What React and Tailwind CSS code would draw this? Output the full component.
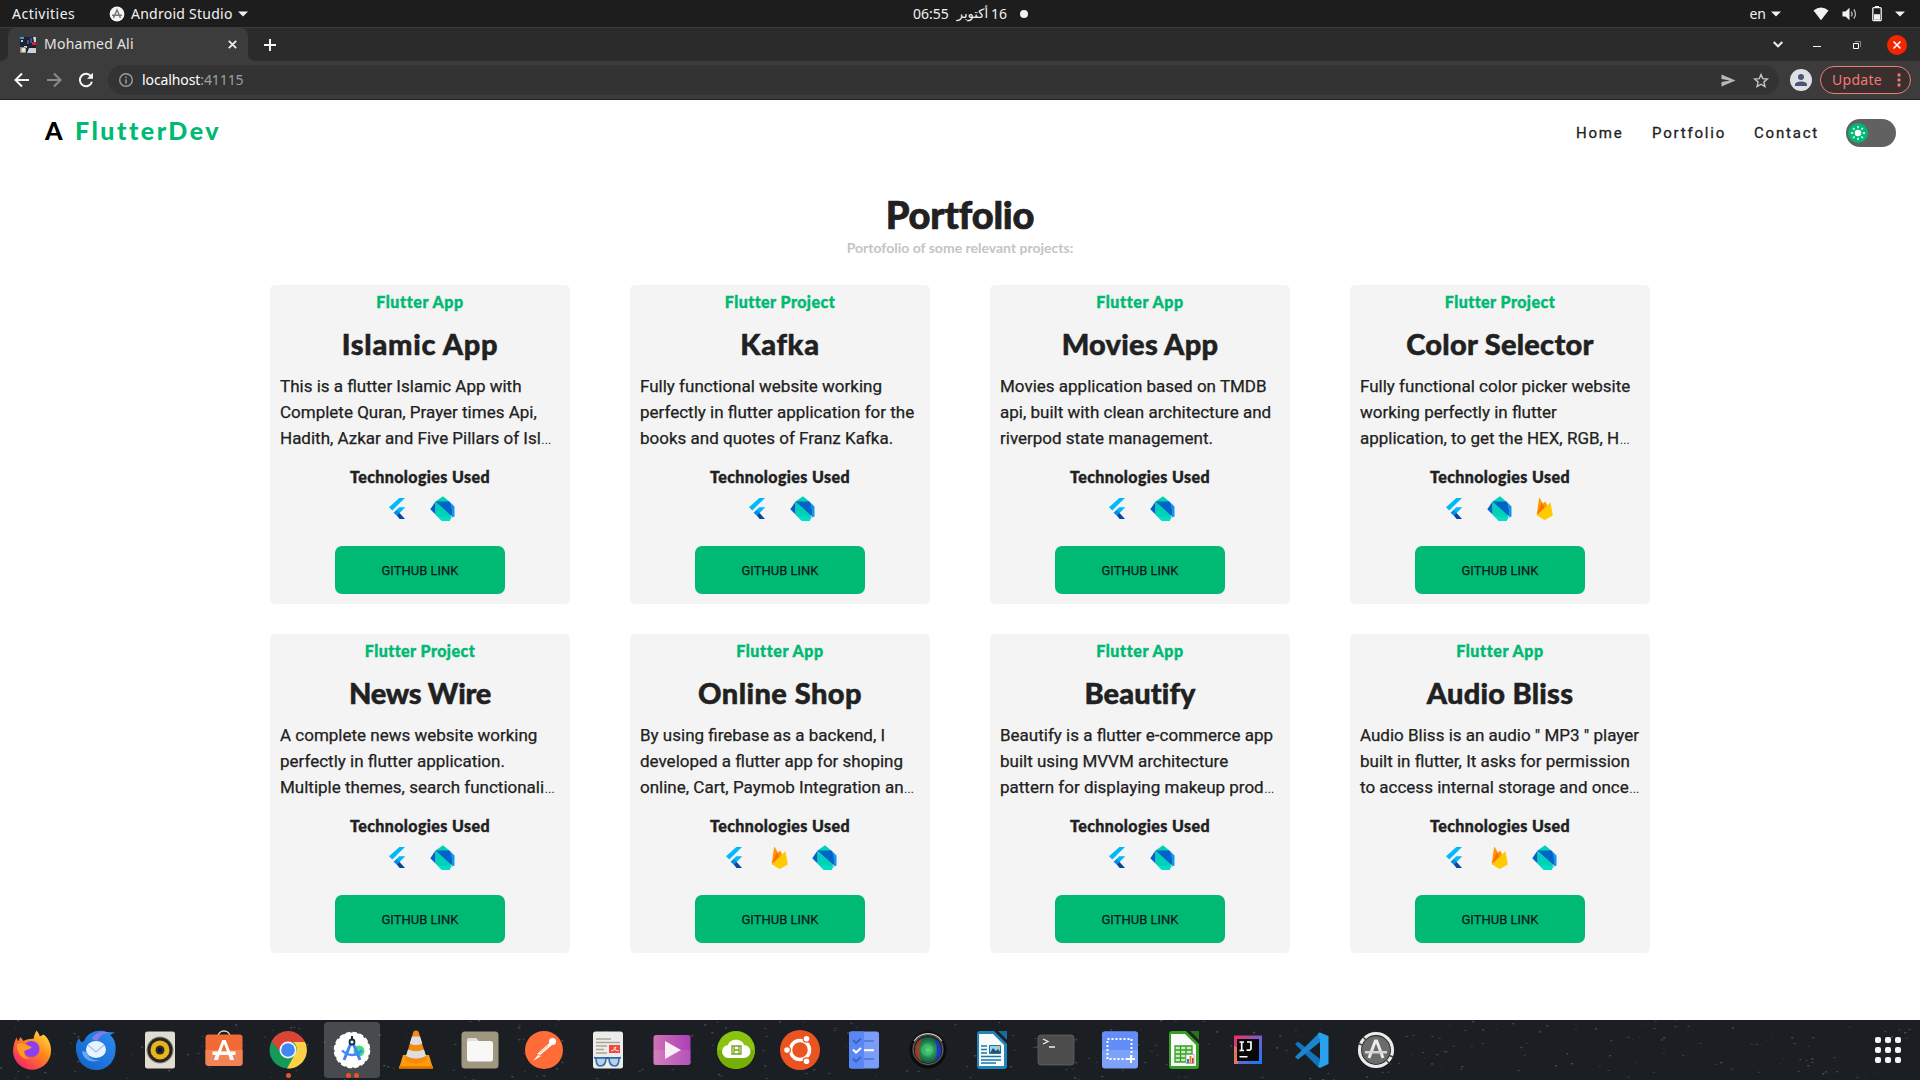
import React from "react";

const projects = [
  { tag: "Flutter App", title: "Islamic App", fit: "tracking-[0.7px]", lines: ["This is a flutter Islamic App with", "Complete Quran, Prayer times Api,", "Hadith, Azkar and Five Pillars of Isl"], more: true, tech: ["flutter", "dart"] },
  { tag: "Flutter Project", title: "Kafka", fit: "tracking-[0.7px]", lines: ["Fully functional website working", "perfectly in flutter application for the", "books and quotes of Franz Kafka."], tech: ["flutter", "dart"] },
  { tag: "Flutter App", title: "Movies App", fit: "tracking-[0.25px]", lines: ["Movies application based on TMDB", "api, built with clean architecture and", "riverpod state management."], tech: ["flutter", "dart"] },
  { tag: "Flutter Project", title: "Color Selector", fit: "tracking-[0.25px]", lines: ["Fully functional color picker website", "working perfectly in flutter", "application, to get the HEX, RGB, H"], more: true, tech: ["flutter", "dart", "firebase"] },
  { tag: "Flutter Project", title: "News Wire", fit: "tracking-[-0.25px]", lines: ["A complete news website working", "perfectly in flutter application.", "Multiple themes, search functionali"], more: true, tech: ["flutter", "dart"] },
  { tag: "Flutter App", title: "Online Shop", fit: "tracking-[0.45px]", lines: ["By using firebase as a backend, I", "developed a flutter app for shoping", "online, Cart, Paymob Integration an"], more: true, tech: ["flutter", "firebase", "dart"] },
  { tag: "Flutter App", title: "Beautify", fit: "tracking-[0.1px]", lines: ["Beautify is a flutter e-commerce app", "built using MVVM architecture", "pattern for displaying makeup prod"], more: true, tech: ["flutter", "dart"] },
  { tag: "Flutter App", title: "Audio Bliss", fit: "tracking-[0.25px]", lines: ['Audio Bliss is an audio " MP3 " player', "built in flutter, It asks for permission", "to access internal storage and once"], more: true, tech: ["flutter", "firebase", "dart"] },
];

const FlutterIcon = () => (
  <svg width="25" height="25" viewBox="0 0 25 25">
    <path d="M14.3 2H20L7.3 14.4 4 11.2Z" fill="#00b9fc" />
    <path d="M14.3 11.2H20.3L14.6 17 11.8 19.6 8.6 16.8Z" fill="#00b9fc" />
    <path d="M11.8 14.1 14.8 17 11.8 19.6 8.8 16.8Z" fill="#0a8be0" />
    <path d="M11.8 19.6 14.6 17 20 23H14.6Z" fill="#04479d" />
  </svg>
);

const DartIcon = () => (
  <svg width="25" height="25" viewBox="0 0 25 25">
    <path d="M5.5 5.5 13 0.3 19.3 5.5 21 20 19.5 25H12L5.5 18.5Z" fill="#00d2b8" />
    <path d="M0.3 13.2 5.5 5.5V18.5Z" fill="#0162c8" />
    <path d="M5.5 5.5H19.3L21.5 8 22.8 21Z" fill="#0162c8" />
    <path d="M19.3 5.5 24.5 10.5V20.5L22 21.5C22.6 16 21.8 10 19.3 5.5Z" fill="#1395ea" />
    <path d="M5.5 18.5C10 21.5 16 22 22 21L19.5 25H12Z" fill="#00dfca" />
  </svg>
);

const FirebaseIcon = () => (
  <svg width="25" height="25" viewBox="0 0 25 25">
    <path d="M4.7 18.5 7.2 1.5 11 7.5 13.4 5.4 15.6 10.4Z" fill="#ff9800" />
    <path d="M4.7 19 9.8 7.6 13.9 13.2Z" fill="#fb6d00" />
    <path d="M4.7 19.3 18.4 6.2 20.8 19.6 12.6 24Z" fill="#ffca00" />
  </svg>
);

const techIcons = { flutter: FlutterIcon, dart: DartIcon, firebase: FirebaseIcon };
const tagFit = { "Flutter App": "tracking-[0.6px]", "Flutter Project": "tracking-[0.45px]" };

function Card({ p }) {
  return (
    <article className="flex h-[319px] w-[300px] flex-col items-center rounded-[5px] bg-[#f4f4f4] text-[#212121]">
      <div className={`mt-[7px] h-5 whitespace-nowrap font-['Lato'] text-[16px] font-black leading-5 text-[#00b973] [-webkit-text-stroke:0.4px] ${tagFit[p.tag]}`}>{p.tag}</div>
      <h2 className={`mt-[14px] h-9 whitespace-nowrap font-['Lato'] text-[29px] font-black leading-9 [-webkit-text-stroke:0.5px] ${p.fit}`}>{p.title}</h2>
      <p className="mt-[11px] w-full pl-[10px] font-['Roboto'] text-[17px] leading-[26px] [-webkit-text-stroke:0.25px]">
        {p.lines.map((l, i) => (
          <span key={l} className="block whitespace-nowrap">
            {l}
            {p.more && i === 2 ? <span className="font-light [-webkit-text-stroke:0]">…</span> : null}
          </span>
        ))}
      </p>
      <div className="mt-[16px] h-5 whitespace-nowrap font-['Lato'] text-[16px] font-black leading-5 tracking-[0.4px] [-webkit-text-stroke:0.4px]">Technologies Used</div>
      <div className="mr-px mt-[9px] flex gap-5">
        {p.tech.map((t) => {
          const Icon = techIcons[t];
          return <Icon key={t} />;
        })}
      </div>
      <button className="mt-[25px] h-12 w-[170px] rounded-[7px] bg-[#00b973] pt-[2px] font-['Roboto'] text-[13px] text-[#071a20] [-webkit-text-stroke:0.25px]">GITHUB LINK</button>
    </article>
  );
}

const Caret = () => (
  <svg width="10" height="6" viewBox="0 0 10 6"><path d="M0 .5h10L5 5.5z" fill="#f2f2f2" /></svg>
);

function TopBar() {
  return (
    <div className="grid h-[28px] grid-cols-3 items-center border-b border-[#3b3b3b] bg-[#1d1d1d] font-['Noto_Sans'] text-[14px] text-[#f2f2f2]">
      <div className="flex items-center pl-3">
        <span className="w-[97px] tracking-[0.5px]">Activities</span>
        <svg width="16" height="16" viewBox="0 0 16 16">
          <circle cx="8" cy="8" r="7.4" fill="#f5f5f5" />
          <path d="M4.5 12 8 3.8l3.5 8.2M3 9.3h10" stroke="#777" strokeWidth="1.5" fill="none" />
        </svg>
        <span className="ml-[6px] mr-[5px] w-[102px] whitespace-nowrap tracking-[0.25px]">Android Studio</span>
        <Caret />
      </div>
      <div className="flex items-center pl-[273px]">
        <span className="w-[36px]">06:55</span>
        <span className="ml-[6px] w-[33px] whitespace-nowrap font-['DejaVu_Sans'] text-[13px]" dir="rtl">أكتوبر</span>
        <span className="ml-[3px] w-[16px]">16</span>
        <span className="ml-[13px] size-2 rounded-full bg-[#f2f2f2]" />
      </div>
      <div className="flex items-center justify-end pr-[15px]">
        <span className="mr-[5px]">en</span>
        <Caret />
        <svg className="ml-[32px]" width="16" height="14" viewBox="0 0 16 14"><path d="M.5 3.6Q8-2.6 15.5 3.6L8 13.2z" fill="#f2f2f2" /></svg>
        <svg className="ml-[13px]" width="16" height="14" viewBox="0 0 16 14">
          <path d="M.5 4.5h3L7.5.8v12.4L3.5 9.5h-3z" fill="#f2f2f2" />
          <path d="M9.3 4.6q1.6 2.4 0 4.8M11.8 2.5q3.4 4.5 0 9" stroke="#bbb" strokeWidth="1.3" fill="none" />
        </svg>
        <svg className="ml-[14px]" width="10" height="16" viewBox="0 0 10 16">
          <path d="M3 0h4v1.5H3z" fill="#f2f2f2" />
          <rect x=".8" y="1.7" width="8.4" height="13" rx="1" fill="none" stroke="#f2f2f2" strokeWidth="1.3" />
          <path d="M2 8.2h6v5.6H2z" fill="#f2f2f2" />
        </svg>
        <span className="ml-[13px]"><Caret /></span>
      </div>
    </div>
  );
}

function TabStrip() {
  return (
    <div className="flex h-[33px] items-end bg-[#2b2b2b] font-['Noto_Sans'] text-[14px] text-[#e4e4e4]">
      <svg width="8" height="8" viewBox="0 0 8 8"><path d="M8 0v8H0q8 0 8-8" fill="#3c3c3c" /></svg>
      <div className="flex h-[33px] w-[240px] items-center rounded-t-lg bg-[#3c3c3c] pl-3">
        <svg width="16" height="16" viewBox="0 0 16 16">
          <path fill="#1d2230" d="M0 0h16v16H0z" />
          <path fill="#28a5d6" d="M0 0h4v2H0z" />
          <path fill="#c9d3da" d="M1 3h2v2H1zM13 0h3v5h-2zM4 9h3v2H4zM9 11h7v5H7z" />
          <path fill="#4a4f96" d="M7 3h2v4H7zM10 1h2v5h-2z" />
          <path fill="#d8202e" d="M12 5h4v3h-4z" />
          <path fill="#8b8a80" d="M0 10h6v6H0z" />
          <circle cx="3.5" cy="13" r="2.2" fill="#e9e6d8" />
        </svg>
        <span className="ml-2 w-[184px] whitespace-nowrap pb-[2px] tracking-[0.25px]">Mohamed Ali</span>
        <svg width="9" height="9" viewBox="0 0 9 9"><path d="M.8.8l7.4 7.4M8.2.8.8 8.2" stroke="#eee" strokeWidth="1.7" /></svg>
      </div>
      <svg width="8" height="8" viewBox="0 0 8 8"><path d="M0 0v8h8Q0 8 0 0" fill="#3c3c3c" /></svg>
      <div className="flex h-[33px] flex-1 items-center pl-2">
        <svg width="12" height="12" viewBox="0 0 12 12"><path d="M6 0v12M0 6h12" stroke="#f5f5f5" strokeWidth="2" /></svg>
        <div className="ml-auto flex items-center pr-[13px]">
          <svg width="10" height="7" viewBox="0 0 10 7"><path d="M.7 1 5 5.3 9.3 1" stroke="#f0f0f0" strokeWidth="2" fill="none" /></svg>
          <span className="ml-[30px] mt-[4px] h-px w-2 bg-white" />
          <svg className="ml-8" width="8" height="8" viewBox="0 0 8 8"><path d="M2 .5h5.500V6" stroke="#888" fill="none" /><path d="M.5 2.500h5v5h-5z" stroke="#fff" fill="none" /></svg>
          <svg className="ml-[26px]" width="20" height="20" viewBox="0 0 20 20"><circle cx="10" cy="10" r="10" fill="#f52500" /><path d="M6.500 6.500l7 7M13.500 6.500l-7 7" stroke="#fff" strokeWidth="1.600" /></svg>
        </div>
      </div>
    </div>
  );
}

function Toolbar() {
  return (
    <div className="flex h-[39px] items-center border-b border-[#222] bg-[#3c3c3c] pl-[14px] font-['Noto_Sans'] text-[14px]">
      <svg width="16" height="16" viewBox="0 0 16 16"><path d="M15 8H2.2M8 1.5 1.5 8 8 14.5" stroke="#f5f5f5" strokeWidth="2" fill="none" /></svg>
      <svg className="ml-4" width="16" height="16" viewBox="0 0 16 16"><path d="M1 8h12.8M8 1.5 14.5 8 8 14.5" stroke="#8a8a8a" strokeWidth="2" fill="none" /></svg>
      <svg className="ml-4" width="16" height="16" viewBox="0 0 16 16"><path d="M13.2 4.4A6.2 6.2 0 1 0 14 9.8" stroke="#f5f5f5" strokeWidth="2" fill="none" /><path d="M15 .8v6H9z" fill="#f5f5f5" /></svg>
      <div className="ml-[14px] flex h-[30px] w-[1671px] items-center rounded-full bg-[#333] pl-[11px]">
        <svg width="14" height="14" viewBox="0 0 14 14"><circle cx="7" cy="7" r="6.3" stroke="#9a9fa5" strokeWidth="1.4" fill="none" /><path d="M7 6.2v4.3M7 3.4v1.5" stroke="#9a9fa5" strokeWidth="1.5" /></svg>
        <span className="ml-[9px] whitespace-nowrap pb-[2px] tracking-[-0.1px] text-[#9aa0a6]"><span className="text-white">localhost</span>:41115</span>
        <svg className="ml-auto" width="15" height="13" viewBox="0 0 15 13"><path d="M.5.5 14.5 6.5.5 12.5V8L9 6.5.5 5z" fill="#b9b9b9" /></svg>
        <svg className="ml-[17px] mr-[10px]" width="16" height="15" viewBox="0 0 16 15"><path d="M8 1.6l1.8 4.1 4.5.4-3.4 3 1 4.4L8 11.2l-3.900 2.300 1-4.400-3.400-3 4.500-.4z" stroke="#c8c8c8" strokeWidth="1.4" fill="none" /></svg>
      </div>
      <svg className="ml-[11px]" width="22" height="22" viewBox="0 0 22 22"><circle cx="11" cy="11" r="11" fill="#dee0e6" /><circle cx="11" cy="8" r="3" fill="#4b5672" /><path d="M5 17v-1.400c0-4 12-4 12 0V17z" fill="#4b5672" /></svg>
      <div className="ml-2 flex h-7 w-[91px] items-center rounded-full border border-[#f07c74] bg-[#3a2e2f] pl-[11px] text-[#f07c74]">
        <span className="w-[49px] pb-px tracking-[0.3px]">Update</span>
        <svg className="ml-4" width="4" height="14" viewBox="0 0 4 14"><path d="M.6.6h2.800v2.800H.6zM.6 5.600h2.800v2.800H.6zM.6 10.600h2.800v2.800H.6z" fill="#f07c74" /></svg>
      </div>
    </div>
  );
}

const Svg = ({ children }) => <svg width="42" height="42" viewBox="0 0 42 42">{children}</svg>;

const dockIcons = [
  <Svg key="firefox">
    <defs>
      <linearGradient id="ff" x1="1" y1="0" x2=".2" y2="1"><stop offset="0" stopColor="#fff04a" /><stop offset=".45" stopColor="#ff8a1e" /><stop offset="1" stopColor="#f81f6b" /></linearGradient>
    </defs>
    <path d="M25.500 1c2 2.500 3 4 3.200 6l4-2c2.500 2 7.300 7 7.300 15.500A19 19 0 0 1 2 22C2 16 4 11 5.500 8l1.500 4 2.500-4.500 3 4C16 10 20 9 22.500 9.500c.5-3.500 1.500-6 3-8.500z" fill="url(#ff)" transform="translate(0 .5)" />
    <circle cx="20.500" cy="20" r="8" fill="#8a3ff0" />
    <path d="M6 15c4-1.500 8-1 11 1.500 2 .5 3 1 3.500 2-2 2.500-5 1.500-7 3.500-1 4 2 7 6 8-8 1-14-5-13.500-15z" fill="#ff9a22" />
  </Svg>,
  <Svg key="thunderbird">
    <defs><linearGradient id="tb" x1="1" y1="0" x2="0" y2="1"><stop offset="0" stopColor="#2a8ef2" /><stop offset="1" stopColor="#1360c8" /></linearGradient></defs>
    <path d="M9 12C13 2 25 0 32 3l8 .5-5 2.500c5 4 6 9 5.500 16A19.500 19.500 0 0 1 3 29c-3-8-3-14 1-20 1.500 4 2.500 5 5 3z" fill="url(#tb)" />
    <path d="M17 10c3-6 10-9 17-6-6 0-9 3-12 8z" fill="#8a7be8" />
    <ellipse cx="21" cy="20.500" rx="10" ry="8.500" fill="#e8f3ff" />
    <path d="M13 16l8 7 8-7" stroke="#a8c9ef" strokeWidth="1.600" fill="none" />
    <path d="M12 23c1 6 7 9 13 8-5 3-17 2-18-9z" fill="#62a8f4" />
  </Svg>,
  <Svg key="rhythmbox">
    <rect x="6" y="2.500" width="30" height="37" rx="2.500" fill="#e2dcd1" />
    <circle cx="21" cy="21" r="13.500" fill="#8f8d87" /><circle cx="21" cy="21" r="12.500" fill="#252525" /><circle cx="21" cy="21" r="9.500" fill="#e9b51d" /><circle cx="21" cy="21" r="4.500" fill="#2b2b2b" /><circle cx="21" cy="21" r="2" fill="#111" />
  </Svg>,
  <Svg key="software">
    <path d="M15 8c0-8 12-8 12 0" stroke="#e8d9b8" strokeWidth="1.600" fill="none" />
    <rect x="2.500" y="5.500" width="37" height="31" rx="3" fill="#f26a35" /><path d="M2.500 21h37v13a3 3 0 0 1-3 3h-31a3 3 0 0 1-3-3z" fill="#f28356" />
    <path d="M15.500 25 20.300 12.500h1.400L26.500 25" stroke="#fff" strokeWidth="3" fill="none" /><path d="M9.500 22.500h23v3.500h-23z" fill="#fff" /><path d="M12.500 26l-1.500 5h4l1.500-5zM29.500 26l1.500 5h-4l-1.500-5z" fill="#fff" />
  </Svg>,
  <Svg key="chrome">
    <circle cx="21" cy="21" r="18.500" fill="#159a57" />
    <path d="M4.500 12.500A18.500 18.500 0 0 1 38 13H21a8 8 0 0 0-8 9z" fill="#db4437" />
    <path d="M38 13A18.500 18.500 0 0 1 20 39.500L28 25a8 8 0 0 0-2-12z" fill="#fdd045" />
    <circle cx="21" cy="21" r="8.500" fill="#f4f4f4" /><circle cx="21" cy="21" r="6.800" fill="#4285f4" />
  </Svg>,
  <Svg key="studio">
    <circle cx="21" cy="21" r="17.500" fill="#fff" /><circle cx="21" cy="21" r="17.300" fill="none" stroke="#fff" strokeWidth="2" strokeDasharray="4.500 2.294" />
    <circle cx="28" cy="22" r="5.500" fill="#3ddc84" />
    <path d="M20 14 13 31M22 14l7 17" stroke="#4285f4" strokeWidth="3" fill="none" /><path d="M11 21.500q9.500 9 20 0" stroke="#4285f4" strokeWidth="2.400" fill="none" />
    <path d="M21 7v5" stroke="#073042" strokeWidth="2" /><circle cx="21" cy="13" r="2.500" fill="#fff" stroke="#073042" strokeWidth="1.800" />
  </Svg>,
  <Svg key="vlc">
    <path d="M8 26h26l4 13.500H4z" fill="#ff9c0c" /><path d="M4 37h34v2.500H4z" fill="#e97b00" />
    <path d="M18.500 2.500Q21 .5 23.500 2.500L32 31q-11 7-22 0z" fill="#f58a12" />
    <path d="M17 7.500h8l2.300 7q-6.300 3-12.600 0zM13 20.500q8 3.500 16 0l2 6.500q-10 5-20 0z" fill="#dedede" />
  </Svg>,
  <Svg key="files">
    <rect x="2.500" y="2.500" width="37" height="37" rx="3.500" fill="#a09780" /><path d="M8 11a2 2 0 0 1 2-2h7l3 3v5H8z" fill="#e5dfd3" />
    <rect x="8" y="12" width="26" height="20.500" rx="2.500" fill="#f9f8f6" />
  </Svg>,
  <Svg key="postman">
    <circle cx="21" cy="21" r="19" fill="#ff6c37" /><circle cx="29.500" cy="12.500" r="3.500" fill="#fff" /><path d="M26.500 14 14 25l3.500 1L29 16zM15 26l-5 6 8-5z" fill="#fff" /><path d="M25 17l-8 7M27 19l-6 4-3 4" stroke="#ff6c37" strokeWidth=".6" fill="none" />
  </Svg>,
  <Svg key="evince">
    <rect x="6" y="2.500" width="30" height="37" rx="2.500" fill="#ececea" />
    <path d="M9 10h15M9 13.500h24M9 17h11M9 20.500h8M9 24h11" stroke="#aaa497" strokeWidth="1.500" />
    <path d="M22 16h11v8H22z" fill="#f0483e" /><path d="M24 22q5-1 5-4-3 0-1 3l4 1" stroke="#fff" fill="none" strokeWidth=".8" />
    <path d="M7 28.500 9 29h23l2-.5" stroke="#1c5fa8" strokeWidth="1.800" fill="none" /><path d="M9 29h10q0 8-6 8-4 0-4-8zM22 29h10q0 8-4 8-6 0-6-8z" fill="#bcd0e2" stroke="#2e6daf" strokeWidth="1.600" />
  </Svg>,
  <Svg key="videos">
    <defs><linearGradient id="vd" x1="0" x2="1"><stop stopColor="#cf71b6" /><stop offset="1" stopColor="#ad3fb5" /></linearGradient></defs>
    <rect x="2.500" y="6" width="37" height="30" rx="2.500" fill="url(#vd)" /><path d="M2.500 21h37v13a2 2 0 0 1-2 2h-33a2 2 0 0 1-2-2z" fill="#fff" opacity=".1" /><path d="M14 12v18l16-9z" fill="#f7eef6" />
  </Svg>,
  <Svg key="cloud">
    <circle cx="21" cy="21" r="19" fill="#8ac411" /><path d="M2 21a19 19 0 0 0 38 0z" fill="#76b007" />
    <path d="M14 29a6.500 6.500 0 0 1-1-13c2-7 14-7 16 0a6.500 6.500 0 0 1 0 13z" fill="#fff" /><path d="M17 17h9v8h-9zM19 17v8M24 17v8M19 21h5" stroke="#77a51a" fill="none" strokeWidth="1.300" />
  </Svg>,
  <Svg key="ubuntu">
    <circle cx="21" cy="21" r="20" fill="#e95420" /><circle cx="21" cy="21" r="9.500" fill="none" stroke="#fff" strokeWidth="3.500" />
    <circle cx="8" cy="21" r="4" fill="#e95420" /><circle cx="27.500" cy="9.700" r="4" fill="#e95420" /><circle cx="27.500" cy="32.300" r="4" fill="#e95420" />
    <circle cx="8" cy="21" r="2.800" fill="#fff" /><circle cx="27.500" cy="9.700" r="2.800" fill="#fff" /><circle cx="27.500" cy="32.300" r="2.800" fill="#fff" />
  </Svg>,
  <Svg key="todo">
    <rect x="6" y="2.500" width="30" height="37" rx="2.500" fill="#799df8" /><path d="M6 5a2.500 2.500 0 0 1 2.500-2.500H21v37H8.500A2.500 2.500 0 0 1 6 37z" fill="#5b87f5" />
    <path d="M10 11l3 3 5-4.500M10 29.500l3 3 5-4.500" stroke="#3b65c5" strokeWidth="2" fill="none" /><path d="M10 20.500l3 3 5-4.500" stroke="#fff" strokeWidth="2" fill="none" />
    <path d="M21 12h10M21 30h10" stroke="#4d76d5" strokeWidth="1.600" /><path d="M21 21.200h10" stroke="#fff" strokeWidth="2" />
  </Svg>,
  <Svg key="camera">
    <defs><radialGradient id="cm"><stop stopColor="#5fe07c" /><stop offset=".6" stopColor="#1f8a52" /><stop offset="1" stopColor="#15503a" /></radialGradient></defs>
    <circle cx="21" cy="21" r="18.500" fill="#0b0b0b" /><circle cx="21" cy="20.500" r="16" fill="#252525" /><path d="M7 12a17 17 0 0 1 28 0" stroke="#ccc" strokeWidth="1.200" fill="none" /><circle cx="21" cy="20.500" r="15" stroke="#777" strokeWidth=".8" fill="none" />
    <circle cx="21" cy="21" r="13" fill="url(#cm)" /><path d="M15 9.500a13 13 0 0 0 0 23q-6-11 0-23z" fill="#c9301a" opacity=".8" /><path d="M28 10a13 13 0 0 1 0 22q4-11 0-22z" fill="#1f2fe0" opacity=".9" /><circle cx="20" cy="21" r="5" fill="none" stroke="#5fe091" opacity=".5" />
  </Svg>,
  <Svg key="writer">
    <path d="M6 5a3 3 0 0 1 3-3h14l13 13v22a3 3 0 0 1-3 3H9a3 3 0 0 1-3-3z" fill="#2085bd" /><path d="M27 2h9v9z" fill="#1a6b9b" /><path d="M8 5h14l11 11v21H8z" fill="#fafafa" />
    <path d="M10 17h6M10 20.500h6M10 24h6M10 27.500h20M10 31h20M10 34h15" stroke="#1878aa" strokeWidth="1.500" /><path d="M18.500 16.500h11v8h-11z" fill="#97d2f2" stroke="#1878aa" /><path d="M19 24l3-5 3 3 2-2 3 4z" fill="#23546d" /><circle cx="27.500" cy="18" r="1.200" fill="#f9b93a" />
  </Svg>,
  <Svg key="terminal">
    <rect x="3" y="6" width="36" height="30" rx="3" fill="#4c4c4c" stroke="#6a6a6a" strokeWidth=".7" /><path d="M8 10l5 2.500-5 2.500M14 18h6" stroke="#ededed" strokeWidth="1.300" fill="none" />
  </Svg>,
  <Svg key="screenshot">
    <rect x="3" y="2.500" width="36" height="37" rx="3" fill="#7ea1f9" /><path d="M3 5.500a3 3 0 0 1 3-3h30a3 3 0 0 1 3 3V21H3z" fill="#638df7" /><path d="M8.500 10h24v20h-24z" fill="none" stroke="#fff" strokeWidth="2" strokeDasharray="2 2" /><path d="M32 26v8M28 30h8" stroke="#fff" strokeWidth="2" />
  </Svg>,
  <Svg key="calc">
    <path d="M6 5a3 3 0 0 1 3-3h14l13 13v22a3 3 0 0 1-3 3H9a3 3 0 0 1-3-3z" fill="#35a023" /><path d="M27 2h9v9z" fill="#267517" /><path d="M8 5h14l11 11v21H8z" fill="#fafafa" />
    <path d="M12 17h17v16H12z" fill="#c8ecc0" /><path d="M12 17h17v16H12zM12 21h17M12 25h17M12 29h17M17.500 17v16M23 17v16" stroke="#35a023" strokeWidth="1.300" fill="none" />
    <path d="M23 25.500h8v9h-8z" fill="#fff" stroke="#999" strokeWidth=".8" /><path d="M24 30h2v4h-2z" fill="#1f7fc0" /><path d="M26.500 27h2v7h-2z" fill="#f57a1f" /><path d="M29 29h1.500v5H29z" fill="#c03a2b" />
  </Svg>,
  <Svg key="intellij">
    <defs><linearGradient id="ij" x1="0" x2="1" y1="0" y2="1"><stop stopColor="#fe2857" /><stop offset=".5" stopColor="#7a5fd0" /><stop offset="1" stopColor="#087cfa" /></linearGradient></defs>
    <path d="M7 6.500h28V35H7z" fill="url(#ij)" /><path d="M7 17l4 2v16H7z" fill="#e3755a" /><path d="M10 10h22v22H10z" fill="#080808" />
    <path d="M12.500 13h4.500M14.700 13v8.500M12.500 21.500h4.500M20 13h4v6.500q0 2.300-4.500 1.500" stroke="#fff" strokeWidth="1.700" fill="none" /><path d="M12.500 27h8v1.500h-8z" fill="#fff" />
  </Svg>,
  <Svg key="code">
    <path d="M4 15l3-2.500 22 17.500-2 8z" fill="#1374bd" /><path d="M4 28l3 2.500L29 13l-1-9z" fill="#1a86cf" /><path d="M27 4l2-.5 8.500 3.500v28L29 39l-2-1 2-8V13z" fill="#28a0ec" />
  </Svg>,
  <Svg key="updater">
    <circle cx="21" cy="21" r="14" fill="#6b6b6b" /><circle cx="21" cy="21" r="16.500" fill="none" stroke="#ebebeb" strokeWidth="3.200" /><path d="M3.500 14.500 7 16M8 8l3 3M34.500 34.500l-3-3M38 28l-3.500-1.500" stroke="#444" strokeWidth="1.500" />
    <path d="M14 29 20.300 12h1.400L28 29" stroke="#ebebeb" strokeWidth="3" fill="none" /><path d="M10 22h22v2.500H10z" fill="#dcd0dc" />
  </Svg>,
];

// Deterministic speckle positions for the starry dock background.
const stars = Array.from({ length: 330 }, (_, i) => ({
  x: (i * 617.3 + ((i * i * 37) % 211)) % 1920,
  y: (i * 23.7 + ((i * i * 13) % 47)) % 60,
  o: 0.12 + ((i * 7) % 10) / 28,
}));

function Dock() {
  return (
    <div className="relative h-[60px] overflow-hidden bg-[#1b1e22]">
      <svg className="absolute inset-0" width="1920" height="60">
        {stars.map((s, i) => (
          <ellipse key={i} cx={s.x} cy={s.y} rx="1.300" ry=".7" fill="#8fa0ac" opacity={s.o} />
        ))}
      </svg>
      <div className="relative flex h-full items-center">
        {dockIcons.map((icon, i) => (
          <div key={i} className="relative flex h-[60px] w-16 items-center justify-center">
            {i === 5 && <div className="absolute inset-x-1 inset-y-[2px] rounded bg-white/20" />}
            <div className="relative">{icon}</div>
            {i === 4 && <span className="absolute bottom-[2px] size-[5px] rounded-full bg-[#e95420]" />}
            {i === 5 && (
              <span className="absolute bottom-[2px] flex gap-[3px]">
                <i className="size-[5px] rounded-full bg-[#e95420]" />
                <i className="size-[5px] rounded-full bg-[#e95420]" />
              </span>
            )}
          </div>
        ))}
        <div className="ml-auto mr-[19px] grid grid-cols-3 gap-[4px]">
          {Array.from({ length: 9 }, (_, i) => (
            <span key={i} className="size-[6px] rounded-[2px] bg-[#f4f4f4]" />
          ))}
        </div>
      </div>
    </div>
  );
}

function SiteHeader() {
  return (
    <header className="flex h-[66px] items-center pl-[45px] pr-6">
      <div className="flex pb-[5px] font-['Lato'] text-[25px] font-black leading-none">
        <span className="w-[30px] text-black">A</span>
        <span className="tracking-[2.5px] text-[#00b973]">FlutterDev</span>
      </div>
      <nav className="ml-auto flex items-center font-['Roboto'] text-[15px] text-[#212121] [-webkit-text-stroke:0.3px]">
        <span className="w-[76px] tracking-[1.8px]">Home</span>
        <span className="w-[102px] tracking-[1.8px]">Portfolio</span>
        <span className="w-[92px] tracking-[1.8px]">Contact</span>
        <span className="flex h-7 w-[50px] items-center rounded-full bg-[#616161] pl-[2px]">
          <svg width="20" height="20" viewBox="0 0 20 20">
            <circle cx="10" cy="10" r="10" fill="#00b973" />
            <circle cx="10" cy="10" r="3.300" fill="#fff" />
            <path d="M10 3v2.200M10 14.800V17M3 10h2.200M14.800 10H17M5 5l1.600 1.600M13.400 13.400 15 15M15 5l-1.600 1.600M6.600 13.400 5 15" stroke="#fff" strokeWidth="1.400" />
          </svg>
        </span>
      </nav>
    </header>
  );
}

export default function App() {
  return (
    <div className="flex h-[1080px] w-[1920px] flex-col overflow-hidden bg-white">
      <TopBar />
      <TabStrip />
      <Toolbar />
      <main className="flex h-[920px] flex-col">
        <SiteHeader />
        <div className="flex flex-col items-center font-['Lato']">
          <h1 className="mt-[24px] h-12 text-[38px] font-black leading-[48px] tracking-[-0.2px] text-[#212121] [-webkit-text-stroke:0.7px]">Portfolio</h1>
          <p className="h-5 whitespace-nowrap text-[14px] font-bold leading-5 text-[#c4c4c4]">Portofolio of some relevant projects:</p>
        </div>
        <section className="mx-auto mt-[27px] grid grid-cols-4 gap-x-[60px] gap-y-[30px]">
          {projects.map((p) => <Card key={p.title} p={p} />)}
        </section>
      </main>
      <Dock />
    </div>
  );
}
